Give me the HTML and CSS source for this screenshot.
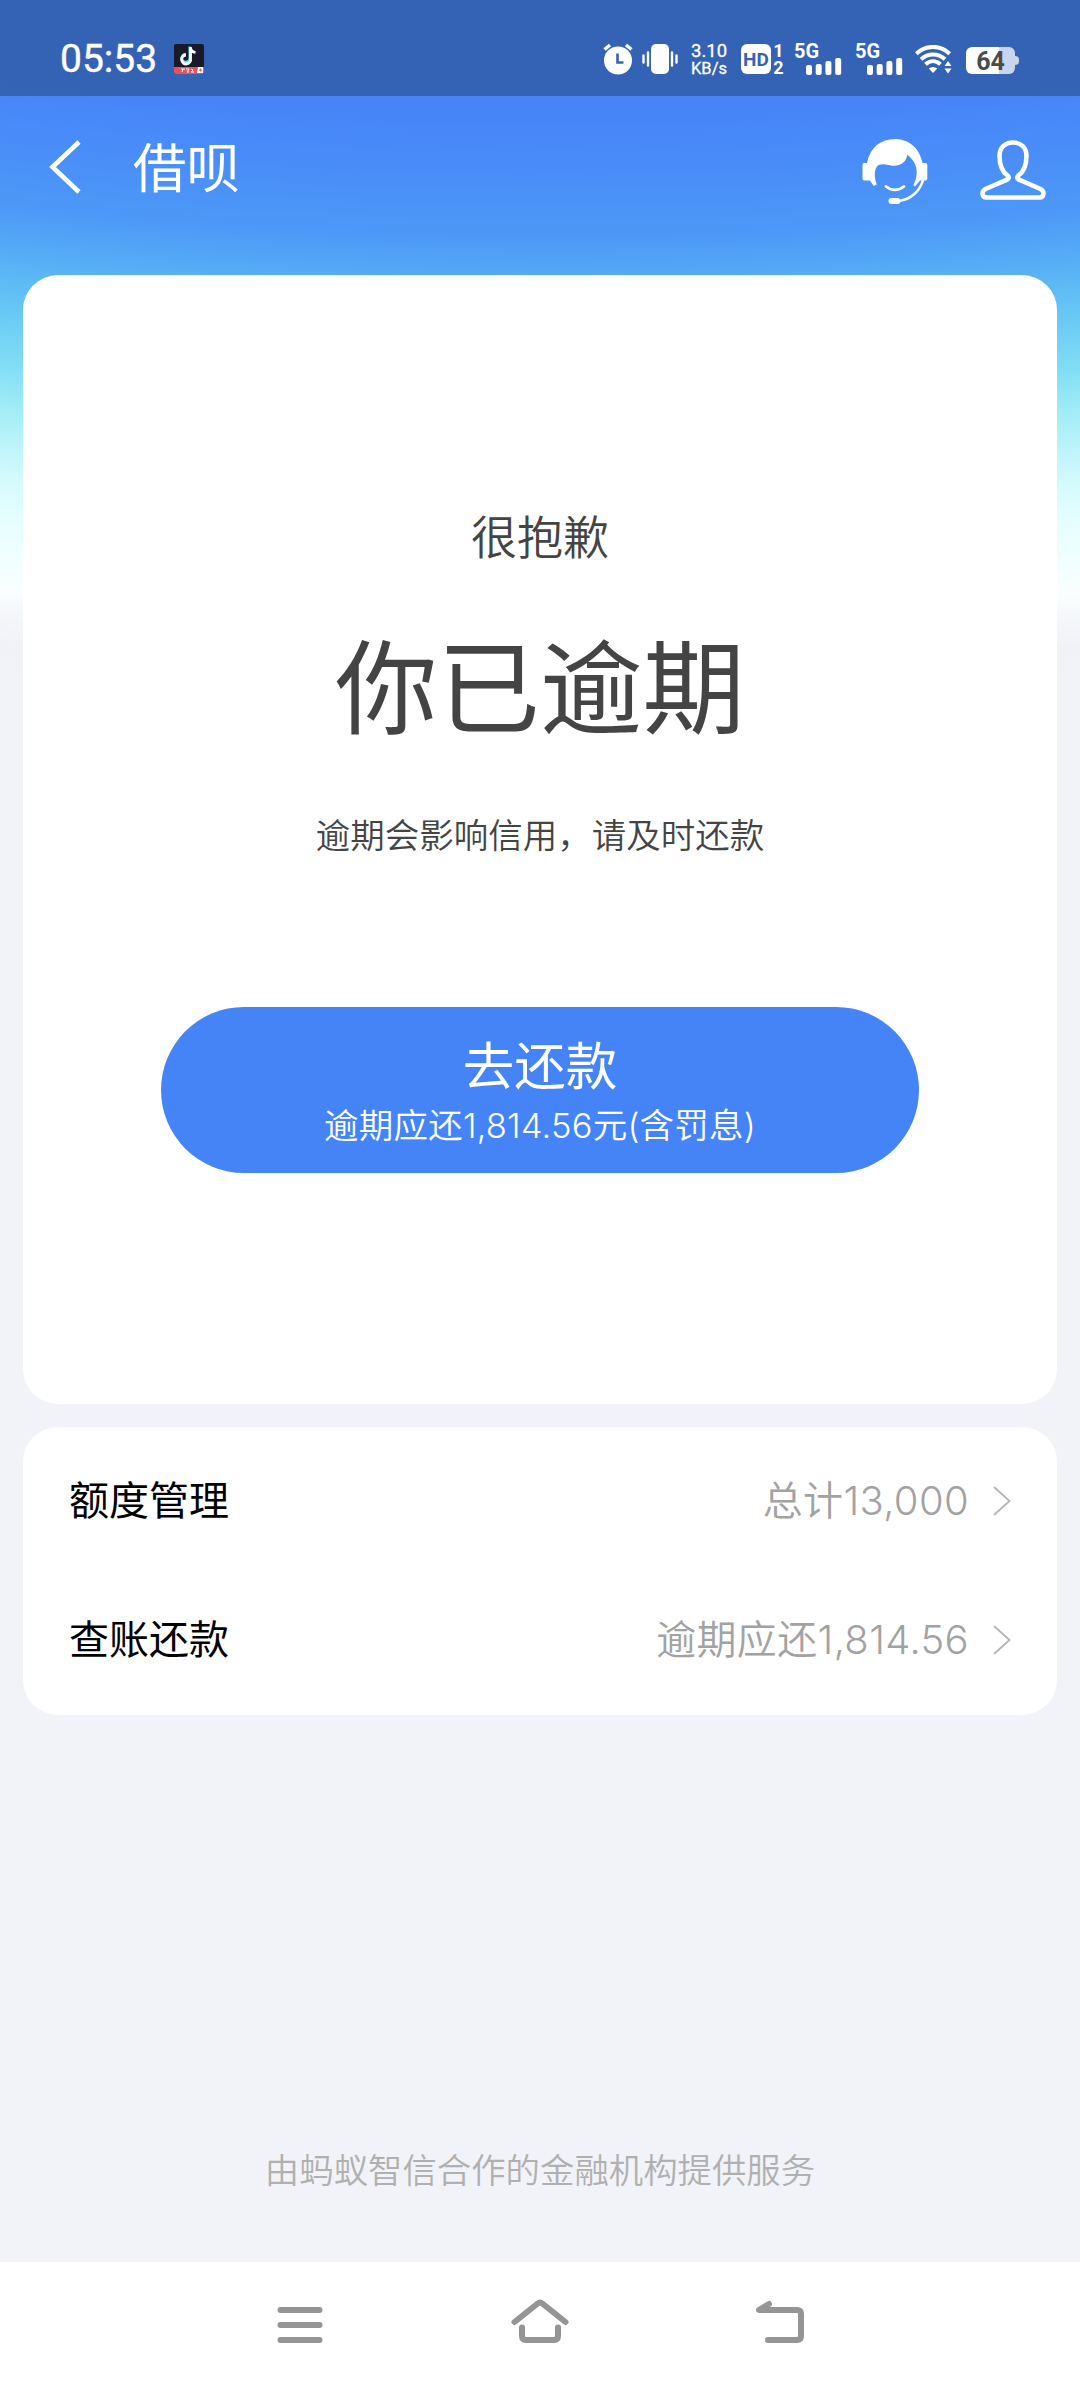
FILE: index.html
```html
<!DOCTYPE html>
<html lang="zh-CN">
<head>
<meta charset="utf-8">
<title>借呗</title>
<link rel="stylesheet" href="styles.css">
</head>
<body>
<div class="screen">
  <div class="status">
    <div class="status-left">
      <span class="clock">05:53</span>
      <svg class="app-badge" width="30" height="30" viewBox="0 0 30 30">
        <rect width="30" height="30" rx="2" fill="#191a28"/>
        <path d="M16.500 3v11.500a4 4 0 1 1-4-4" fill="none" stroke="#5fe3e6" stroke-width="2.600" transform="translate(-.7 -.4)"/>
        <path d="M16.500 3v11.500a4.500 4.500 0 1 1-4.500-3.500M16.500 4c.4 2.800 2 4.200 5 4.400" fill="none" stroke="#fff" stroke-width="2.800"/>
        <path d="M0 23h30v5a2 2 0 0 1-2 2H2a2 2 0 0 1-2-2z" fill="#e9525c"/>
        <path d="M7 25h4M9 25l-1 3M12 25h3l-2 3h2M17 25l2 1-2 2h3" fill="none" stroke="#fff" stroke-width="1"/>
        <path d="M24 23h5v6h-6z" fill="#fff"/><path d="M26.500 24.500v3M25 26h3" stroke="#e9525c"/>
      </svg>
    </div>
    <div class="status-right">
      <svg class="i-alarm" width="30" height="32" viewBox="0 0 30 32">
        <path d="M1.500 6.500 7 2M28.500 6.500 23 2" stroke="#fff" stroke-width="3.400"/>
        <circle cx="15" cy="17.500" r="14" fill="#fff"/>
        <path d="M14.500 10.500v9h6" fill="none" stroke="#3562b6" stroke-width="2.600"/>
      </svg>
      <svg class="i-vibrate" width="36" height="30" viewBox="0 0 36 30">
        <rect x="9" width="18" height="30" rx="5" fill="#fff"/>
        <path d="M1.500 11.500v7M6 8.500v13M30 8.500v13M34.500 11.500v7" stroke="#fff" stroke-width="2.400" stroke-linecap="round"/>
      </svg>
      <div class="speed"><span>3.10</span><span>KB/s</span></div>
      <div class="hd">HD</div>
      <div class="sims"><span>1</span><span>2</span></div>
      <div class="net">
        <span>5G</span>
        <svg width="36" height="17" viewBox="0 0 36 17"><g fill="#fff"><rect y="7" width="6" height="10" rx="2"/><rect x="9.700" y="6" width="6" height="11" rx="2"/><rect x="19.400" y="3" width="6" height="14" rx="2"/><rect x="29.200" width="6" height="17" rx="2"/></g></svg>
      </div>
      <div class="net net-second">
        <span>5G</span>
        <svg width="36" height="17" viewBox="0 0 36 17"><g fill="#fff"><rect y="7" width="6" height="10" rx="2"/><rect x="9.700" y="6" width="6" height="11" rx="2"/><rect x="19.400" y="3" width="6" height="14" rx="2"/><rect x="29.200" width="6" height="17" rx="2"/></g></svg>
      </div>
      <svg class="i-wifi" width="37" height="29" viewBox="0 0 37 29">
        <g fill="none" stroke="#fff" stroke-width="4">
          <path d="M1.300 8.700C11-.4 25-.4 34.700 8.700"/>
          <path d="M6 14.200c7-6.400 17-6.400 24 0"/>
          <path d="M10.500 19.300c4.500-4 10.500-4 15 0"/>
        </g>
        <path d="M13.800 23.500c2.700-2 5.700-2 8.400 0L18 28z" fill="#fff"/>
        <path d="M29.500 21 33 16l3.500 5zM29.500 23.500h7L33 28.500z" fill="#fff"/>
      </svg>
      <div class="battery"><b>64</b></div>
    </div>
  </div>

  <header class="header">
    <svg class="i-back" width="32" height="54" viewBox="0 0 32 54"><path d="M30 2 3.500 27 30 52" fill="none" stroke="#fff" stroke-width="4.600"/></svg>
    <h1 class="title">借呗</h1>
    <svg class="i-service" width="66" height="66" viewBox="0 0 66 66">
      <path fill="#fff" d="M5 25C8 9 19 1 33 1s24.500 9 27.500 24h3a1.800 1.800 0 0 1 1.800 1.800v14a1.800 1.800 0 0 1-1.800 1.800H58l-5 6-1.600-1.400c3.600-7 4.200-14.200 2-20-1.600-4.600-4.600-7.200-8-10.700-1 8-8 12.500-16.500 11-5-1.100-8-2-12.400-.4-4 2.500-5 11-1.700 19.500l-3 1.400-4-5.400H2.300A1.800 1.800 0 0 1 .5 40.800v-14A1.800 1.800 0 0 1 2.300 25z"/>
      <path d="M24 48.500c5.500 4.500 12.500 4.500 18 0" fill="none" stroke="#fff" stroke-width="2.800" stroke-linecap="round"/>
      <path d="M61 42c-3 11-12 19.500-24 21" fill="none" stroke="#fff" stroke-width="2.600"/>
      <rect x="26.500" y="60" width="12" height="6" rx="3" fill="#fff"/>
    </svg>
    <svg class="i-user" width="66" height="60" viewBox="0 0 66 60"><path d="M33 2.500c-8 0-13.500 5.500-13.500 13.200C19.500 25 21.500 31 27.500 35.500c2 2 1.600 3-.5 4.200L5.500 49c-4.500 2.500-3.500 8.500 1 8.500h53c4.500 0 5.500-6 1-8.500L39 39.700c-2.100-1.200-2.500-2.200-.5-4.200C44.500 31 46.500 25 46.500 15.700 46.500 8 41 2.500 33 2.500z" fill="none" stroke="#fff" stroke-width="4.600"/></svg>
  </header>

  <main class="main">
    <section class="card notice">
      <p class="sorry">很抱歉</p>
      <h2 class="headline">你已逾期</h2>
      <p class="hint">逾期会影响信用，请及时还款</p>
      <button class="repay"><span class="repay-main">去还款</span><span class="repay-sub">逾期应还1,814.56元(含罚息)</span></button>
    </section>
    <section class="card list">
      <div class="row"><span>额度管理</span><span class="value">总计13,000</span><svg width="18" height="32" viewBox="0 0 18 32"><path d="M1 2l15.500 14L1 30" fill="none" stroke="#b5b5b5" stroke-width="1.800"/></svg></div>
      <div class="row"><span>查账还款</span><span class="value">逾期应还1,814.56</span><svg width="18" height="32" viewBox="0 0 18 32"><path d="M1 2l15.500 14L1 30" fill="none" stroke="#b5b5b5" stroke-width="1.800"/></svg></div>
    </section>
    <p class="provider">由蚂蚁智信合作的金融机构提供服务</p>
  </main>

  <nav class="nav">
    <svg width="60" height="48" viewBox="0 0 60 48"><path d="M10.500 12h39M10.500 27h39M10.500 42h39"/></svg>
    <svg width="60" height="48" viewBox="0 0 60 48"><path d="M4.500 24 27.700 5.500q2.300-1.800 4.600 0L55.500 24M12 29.500V38q0 4 4 4h28q4 0 4-4v-8.500"/></svg>
    <svg width="60" height="48" viewBox="0 0 60 48"><path d="M19 6 9 12h38q4 0 4 4v22q0 4-4 4H18"/></svg>
  </nav>
</div>
</body>
</html>
```
FILE: styles.css
```css
* { box-sizing: border-box; margin: 0; padding: 0; }
body {
  width: 1080px;
  height: 2388px;
  font-family: Inter, "Noto Sans CJK SC", sans-serif;
  background: #f2f3f8;
}
svg { display: block; flex: none; }
/* The sky gradient curves slightly: its centre sits far above the screen. */
.screen {
  width: 1080px;
  height: 2388px;
  display: flex;
  flex-direction: column;
  overflow: hidden;
  background: radial-gradient(circle at 560px -4700px, #4684f8 4700px, #4684f8 4810px, #4a8ef8 4880px, #4c99f7 4939px, #58b1f5 4994px, #68c8f4 5041px, #82def5 5097px, #a0ecf6 5136px, #bef4fa 5176px, #d8fbfd 5215px, #e8feff 5255px, #f3ffff 5294px, #fafefe 5320px, #f4f6fa 5345px, #f0f2f7 5373px, #f2f3f8 5430px);
}
.status {
  height: 96px;
  display: flex;
  justify-content: space-between;
  background: rgba(22, 39, 64, .36);
  color: #fff;
}
.status-left { display: flex; align-items: center; padding: 22px 0 0 60px; gap: 18px; }
.clock { width: 96px; font: 400 39px/40px Roboto, sans-serif; -webkit-text-stroke: .4px #fff; white-space: nowrap; }
.status-right { display: flex; align-items: flex-start; padding: 44px 60px 0 0; }
.i-alarm { margin-right: 9px; margin-top: -1px; }
.i-vibrate { margin-right: 13px; }
.speed { width: 37px; display: flex; flex-direction: column; font: 400 18.5px/17px Roboto, sans-serif; -webkit-text-stroke: .3px #fff; margin: -1px 13px 0 0; white-space: nowrap; }
.speed span + span { font-size: 16.5px; }
.hd { width: 30px; height: 30px; border-radius: 6px; background: #fff; color: #3562b6; font: 700 19px/31px Roboto, sans-serif; text-align: center; margin-right: 2px; }
.sims { width: 11px; display: flex; flex-direction: column; align-items: center; font: 700 18px/17px Roboto, sans-serif; margin: -2px 10px 0 0; }
.net { width: 49px; height: 30px; display: flex; flex-direction: column; font: 700 20px/14px Roboto, sans-serif; margin-right: 12px; }
.net svg { margin-left: 12px; }
.net-second { margin-right: 11px; }
.i-wifi { margin-top: 1px; margin-right: 14px; }
.battery { width: 54px; height: 27px; margin-top: 3px; display: flex; align-items: center; }
.battery b { width: 49px; height: 27px; border-radius: 6px; background: linear-gradient(90deg, #fff 67%, #c9d5ec 67%); color: #4b4b4b; font: 700 25px/29px Roboto, sans-serif; text-align: center; }
.battery::after { content: ""; width: 4px; height: 9px; background: #c9d5ec; border-radius: 0 4px 4px 0; }

.header { height: 179px; display: flex; align-items: flex-start; padding: 42px 34px 0 49px; }
.i-back { margin-top: 2px; }
.title { margin: 1px auto 0 52px; font-size: 53.5px; line-height: 60px; font-weight: 400; color: #fff; }
.i-service { margin-right: 52px; }
.i-user { margin-top: 2px; }

.main { flex: 1; padding: 0 23px; display: flex; flex-direction: column; }
.card { background: #fff; border-radius: 35px; }
.notice { height: 1129px; padding-top: 229px; display: flex; flex-direction: column; align-items: center; color: #444; }
.sorry { font-size: 46px; line-height: 66px; font-weight: 350; }
.headline { margin-top: 54px; font-size: 102.5px; line-height: 130px; font-weight: 400; }
.hint { margin-top: 57px; font-size: 34.5px; line-height: 50px; font-weight: 350; }
.repay { margin-top: 146px; width: 758px; height: 166px; padding-top: 5px; border: 0; border-radius: 83px; background: #4584f6; color: #fff; font-family: inherit; display: flex; flex-direction: column; align-items: center; justify-content: center; }
.repay-main { font-size: 51.5px; line-height: 66px; }
.repay-sub { font-size: 34.5px; line-height: 54px; font-weight: 350; letter-spacing: .2px; }
.list { margin-top: 23px; height: 288px; padding: 5px 46px 0; }
.row { height: 138.500px; display: flex; align-items: center; font-size: 40px; line-height: 56px; color: #000; }
.value { margin-left: auto; margin-right: 24px; color: #a2a2a2; font-weight: 350; letter-spacing: .35px; }
.provider { margin-top: auto; margin-bottom: 66px; text-align: center; font-size: 34.4px; line-height: 50px; font-weight: 350; color: #b0b0b0; }
.nav { height: 126px; padding: 36px 270px 0; display: flex; justify-content: space-between; background: #fff; }
.nav svg { fill: none; stroke: #959595; stroke-width: 6; stroke-linecap: round; stroke-linejoin: round; }
```
